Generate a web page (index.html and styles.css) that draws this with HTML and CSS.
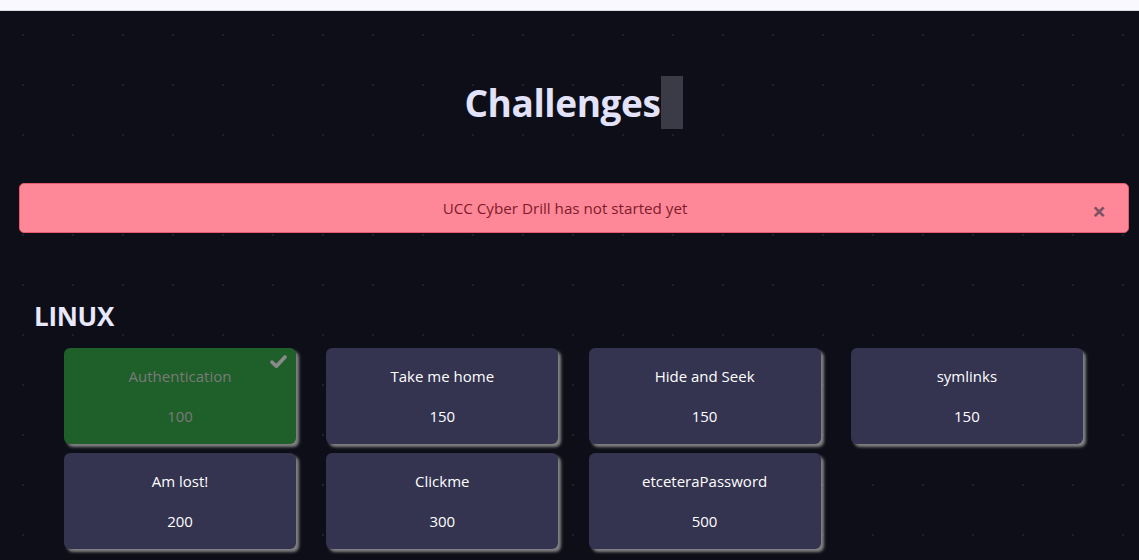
FILE: index.html
```html
<!DOCTYPE html>
<html lang="en">
<head>
<meta charset="utf-8">
<title>Challenges</title>
<link rel="stylesheet" href="styles.css">
</head>
<body>
<div class="topbar"></div>
<main class="page">
  <h1 class="title">Challenges<span class="cursor"></span></h1>
  <div class="alert">
    <span class="alert-text">UCC Cyber Drill has not started yet</span>
    <button class="alert-close" type="button">&times;</button>
  </div>
  <section class="category">
    <h2 class="cat-title">LINUX</h2>
    <div class="grid">
      <div class="card solved">
        <svg class="check" viewBox="0 0 16 16" width="19" height="19"><path d="M2.5 8.5 L6.2 12 L13.5 4.2" fill="none" stroke="currentColor" stroke-width="3" stroke-linecap="round" stroke-linejoin="round"/></svg>
        <div class="card-name">Authentication</div>
        <div class="card-pts">100</div>
      </div>
      <div class="card"><div class="card-name">Take me home</div><div class="card-pts">150</div></div>
      <div class="card"><div class="card-name">Hide and Seek</div><div class="card-pts">150</div></div>
      <div class="card"><div class="card-name">symlinks</div><div class="card-pts">150</div></div>
      <div class="card"><div class="card-name">Am lost!</div><div class="card-pts">200</div></div>
      <div class="card"><div class="card-name">Clickme</div><div class="card-pts">300</div></div>
      <div class="card"><div class="card-name">etceteraPassword</div><div class="card-pts">500</div></div>
    </div>
  </section>
</main>
</body>
</html>
```

FILE: styles.css
```css
html, body {
  margin: 0;
  padding: 0;
  background: #0d0e17;
  font-family: "Open Sans", "Noto Sans", sans-serif;
}
.topbar {
  height: 10px;
  background: #f8f8fe;
  border-bottom: 1px solid #d8d8e0;
}
.page {
  box-sizing: border-box;
  height: 549px;
  background-color: #0d0e17;
  background-image: radial-gradient(circle, #1f2029 1px, transparent 1.6px);
  background-size: 50px 50px;
  background-position: -2px -1px;
  padding-top: 65px;
  overflow: hidden;
}
.title {
  margin: 0;
  padding-left: 8px;
  height: 53px;
  display: flex;
  justify-content: center;
  align-items: center;
  font-size: 37px;
  font-weight: 700;
  color: #e2e2fb;
  letter-spacing: -0.4px;
}
.cursor {
  display: inline-block;
  width: 22px;
  height: 53px;
  background: #3b3b47;
}
.alert {
  margin: 54px 10px 0 19px;
  padding-right: 18px;
  height: 48px;
  background: #ff8898;
  border: 1px solid #e65b6e;
  border-radius: 5px;
  display: flex;
  align-items: center;
  justify-content: center;
  position: relative;
}
.alert-text {
  color: #7e1b2b;
  font-size: 15.2px;
}
.alert-close {
  position: absolute;
  right: 22px;
  top: 15px;
  background: none;
  border: none;
  padding: 0;
  font-family: "Open Sans", sans-serif;
  font-size: 24px;
  line-height: 24px;
  font-weight: 700;
  color: #7a5261;
}
.category {
  padding: 66px 0 0 34px;
}
.cat-title {
  margin: 0;
  font-size: 26px;
  font-weight: 700;
  color: #e8e8fe;
  line-height: 34px;
  letter-spacing: -0.3px;
}
.grid {
  margin: 15px 0 0 30px;
  display: grid;
  grid-template-columns: repeat(4, 232px);
  column-gap: 30.3px;
  row-gap: 9px;
}
.card {
  position: relative;
  height: 96px;
  background: #343350;
  border-radius: 6px;
  box-shadow: 3px 3px 3px rgba(150, 150, 150, 0.85);
  display: flex;
  flex-direction: column;
  align-items: center;
  color: #ffffff;
  font-size: 15px;
}
.card-name {
  margin-top: 17px;
  line-height: 22px;
}
.card-pts {
  margin-top: 18px;
  line-height: 22px;
}
.card.solved {
  background: #1f5f29;
  color: #7a7a7a;
}
.check {
  position: absolute;
  top: 4px;
  right: 8px;
  color: #8a8a8a;
}
```
